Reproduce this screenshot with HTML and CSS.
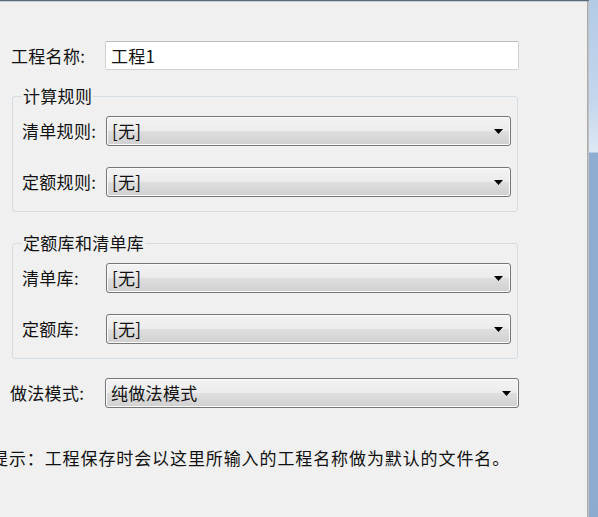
FILE: index.html
```html
<!DOCTYPE html>
<html lang="zh-CN">
<head>
<meta charset="utf-8">
<title>工程设置</title>
<link rel="stylesheet" href="styles.css">
</head>
<body>
<div class="screen">
  <div class="dialog">
    <div class="row name-row">
      <span class="lbl">工程名称:</span>
      <div class="textbox">工程1</div>
    </div>

    <fieldset class="group g1">
      <legend>计算规则</legend>
      <div class="row">
        <span class="lbl">清单规则:</span>
        <div class="combo"><span>[无]</span><svg class="arrow" width="9" height="5" viewBox="0 0 9 5"><polygon points="0,0 9,0 4.5,5" fill="#000"/></svg></div>
      </div>
      <div class="row">
        <span class="lbl">定额规则:</span>
        <div class="combo"><span>[无]</span><svg class="arrow" width="9" height="5" viewBox="0 0 9 5"><polygon points="0,0 9,0 4.5,5" fill="#000"/></svg></div>
      </div>
    </fieldset>

    <fieldset class="group g2">
      <legend>定额库和清单库</legend>
      <div class="row">
        <span class="lbl">清单库:</span>
        <div class="combo"><span>[无]</span><svg class="arrow" width="9" height="5" viewBox="0 0 9 5"><polygon points="0,0 9,0 4.5,5" fill="#000"/></svg></div>
      </div>
      <div class="row">
        <span class="lbl">定额库:</span>
        <div class="combo"><span>[无]</span><svg class="arrow" width="9" height="5" viewBox="0 0 9 5"><polygon points="0,0 9,0 4.5,5" fill="#000"/></svg></div>
      </div>
    </fieldset>

    <div class="row mode-row">
      <span class="lbl">做法模式:</span>
      <div class="combo wide"><span>纯做法模式</span><svg class="arrow" width="9" height="5" viewBox="0 0 9 5"><polygon points="0,0 9,0 4.5,5" fill="#000"/></svg></div>
    </div>

    <p class="hint">提示：工程保存时会以这里所输入的工程名称做为默认的文件名。</p>
  </div>
  <div class="edge"></div>
  <div class="frame"></div>
</div>
</body>
</html>
```

FILE: styles.css
```css
html, body {
  margin: 0;
  padding: 0;
  background: #f0f0f0;
  overflow: hidden;
}

body {
  font-family: "Noto Sans CJK SC", "Noto Sans", sans-serif;
  font-size: 17px;
  letter-spacing: 0.3px;
  line-height: 20px;
  color: #111;
}

.screen {
  display: flex;
  height: 517px;
}

.dialog {
  width: 587px;
  flex: none;
  box-sizing: border-box;
  border-top: 1px solid #5d6b79;
  box-shadow: inset 0 1px 0 #c3cbd3;
  padding: 40px 0 0 11px;
  background: #f0f0f0;
}

.edge {
  width: 2px;
  flex: none;
  border-top: 1px solid #5d6b79;
  background: linear-gradient(to right, #9f9f9f, #cdcdcd);
}

.frame {
  flex: 1;
  background: linear-gradient(to bottom, #b4cbe6 0, #c3d6ec 100px, #dde8f4 152px, #8fadd1 153px, #8cabcf 100%);
}

.row {
  display: flex;
  align-items: center;
  height: 30px;
}

.name-row {
  height: 29px;
}

.lbl {
  width: 94px;
  flex: none;
  white-space: nowrap;
}

.textbox {
  width: 414px;
  height: 29px;
  box-sizing: border-box;
  background: #fff;
  border: 1px solid #d2d2d2;
  border-top-color: #bdbdbd;
  border-radius: 2px;
  padding-left: 5px;
  line-height: 27px;
}

.group {
  width: 506px;
  min-width: 0;
  box-sizing: border-box;
  margin: 17px 0 0 1px;
  padding: 0 6px 14px 9px;
  border: 1px solid #d5dde4;
  border-radius: 3px;
}

.group legend {
  padding: 0 1px;
  margin: 0;
  line-height: 18px;
}

.g2 {
  margin-top: 22px;
}

.group .row {
  margin-top: 11px;
}

.group .row + .row {
  margin-top: 21px;
}

.group .lbl {
  width: 84px;
}

.combo {
  width: 405px;
  height: 30px;
  box-sizing: border-box;
  display: flex;
  align-items: center;
  justify-content: space-between;
  padding: 0 7px 0 5px;
  border: 1px solid #767676;
  border-radius: 3px;
  background: linear-gradient(to bottom, #f3f3f3 0%, #ececec 48%, #dedede 52%, #d0d0d0 100%);
  box-shadow: inset 0 0 0 1px #fbfbfb;
}

.combo.wide {
  width: 414px;
}

.arrow {
  flex: none;
  display: block;
}

.mode-row {
  margin-top: 19px;
  margin-left: -1px;
}

.mode-row .lbl {
  width: 95px;
}

.hint {
  margin: 40px 0 0 -20px;
  white-space: nowrap;
  line-height: 20px;
  letter-spacing: 0.9px;
}
```
